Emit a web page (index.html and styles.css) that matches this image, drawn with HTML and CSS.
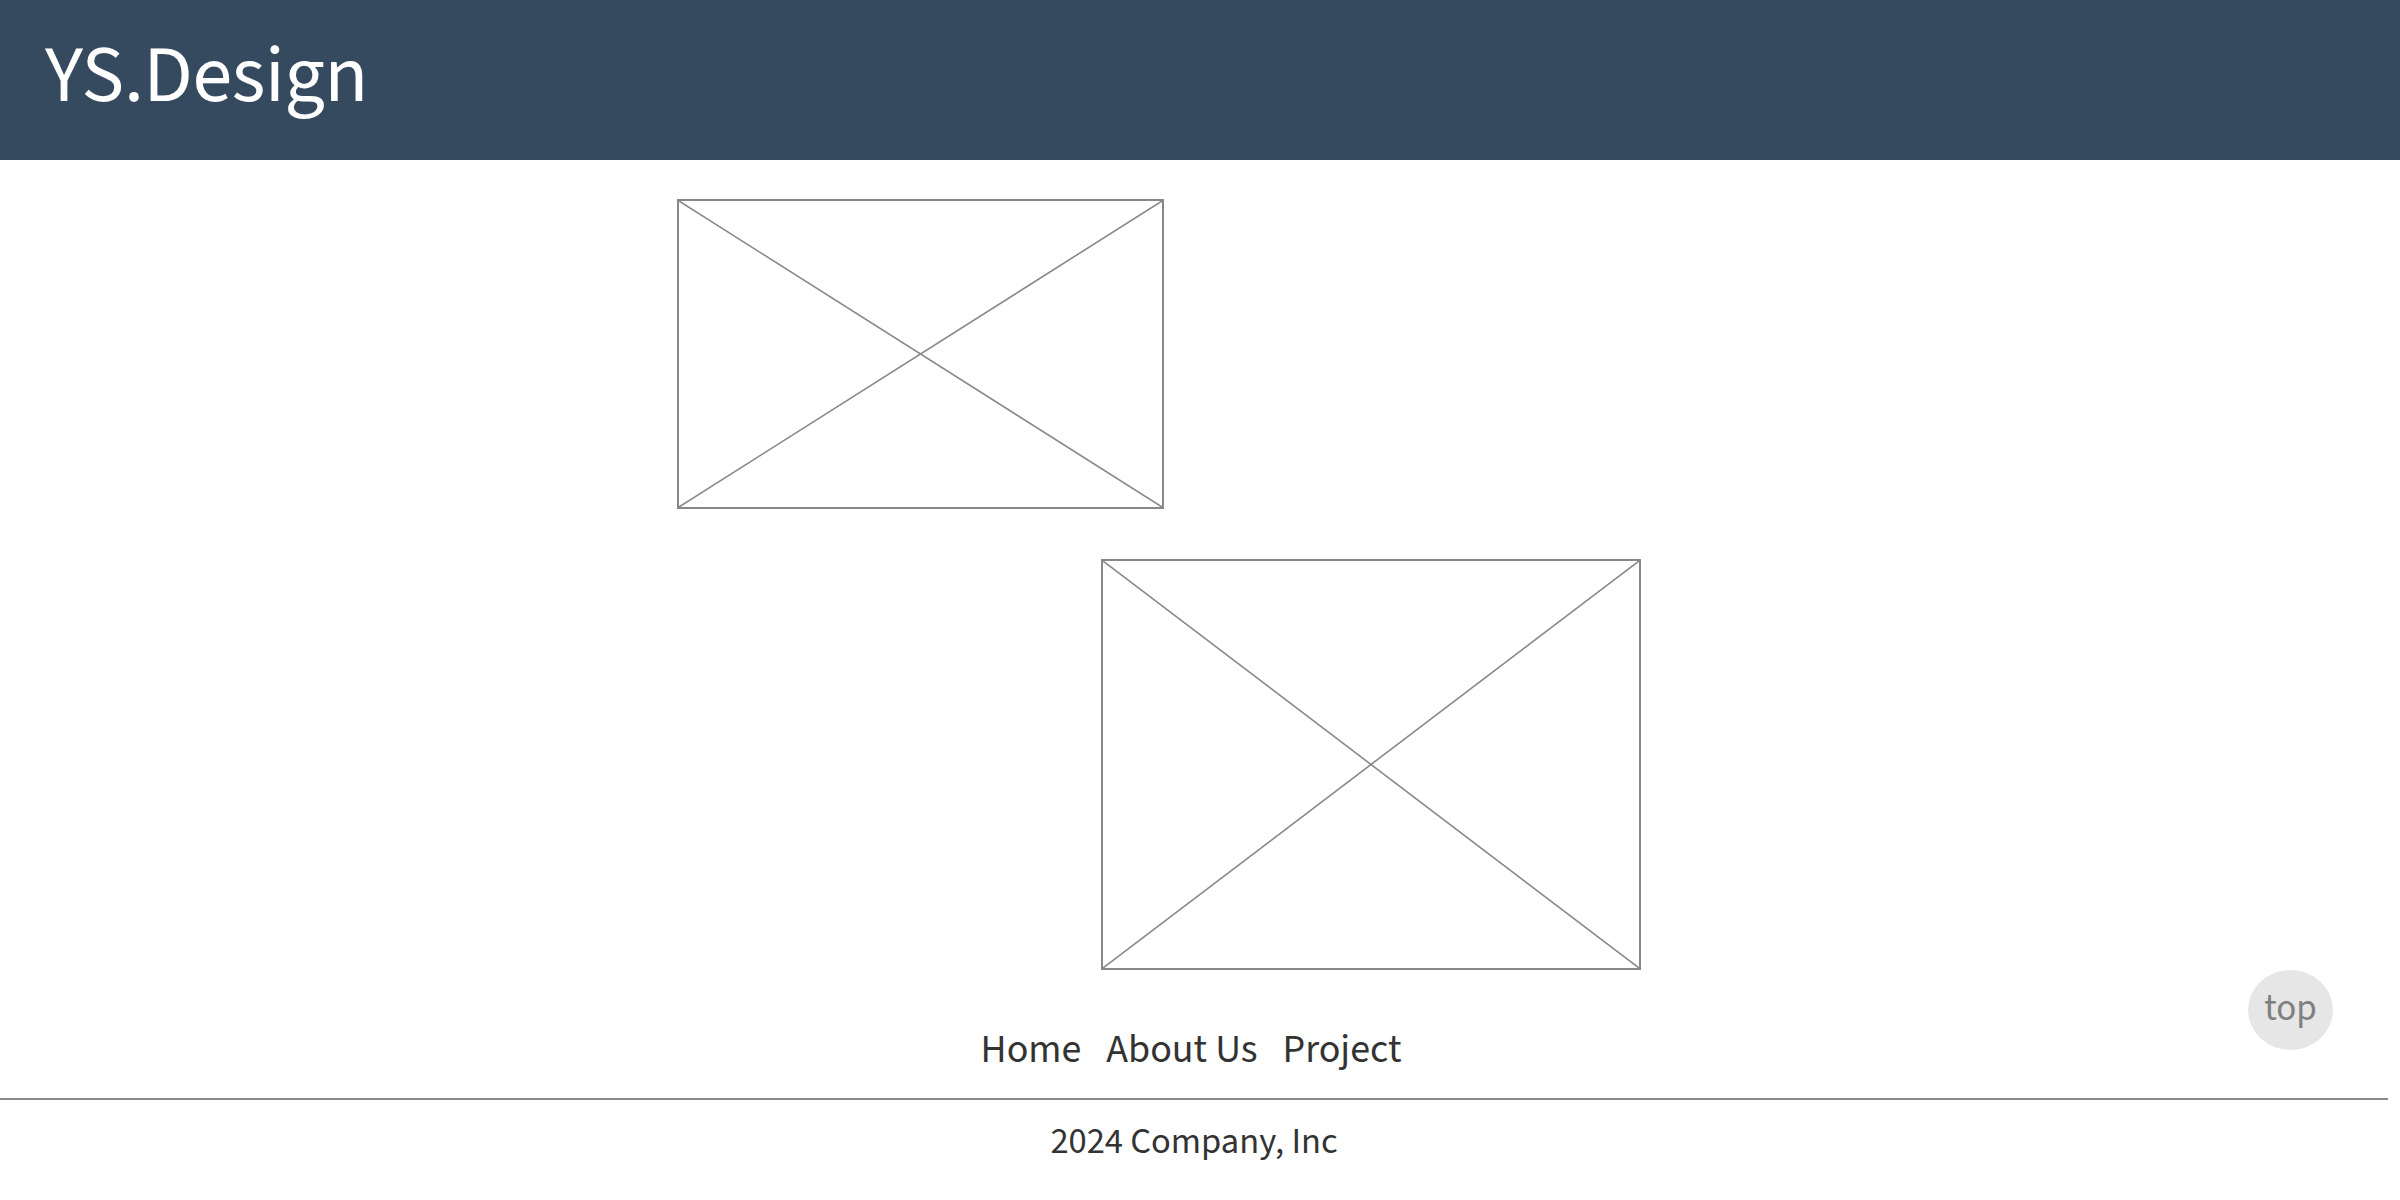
FILE: index.html
```html
<!DOCTYPE html>
<html lang="en">
<head>
<meta charset="utf-8">
<title>YS.Design</title>
<link rel="stylesheet" href="styles.css">
</head>
<body>
<header class="site-header">
  <h1 class="logo">YS.Design</h1>
</header>
<main class="content">
  <div class="ph ph-one">
    <svg class="ph-svg" viewBox="0 0 100 100" preserveAspectRatio="none">
      <line x1="0" y1="0" x2="100" y2="100" vector-effect="non-scaling-stroke"/>
      <line x1="100" y1="0" x2="0" y2="100" vector-effect="non-scaling-stroke"/>
    </svg>
  </div>
  <div class="ph ph-two">
    <svg class="ph-svg" viewBox="0 0 100 100" preserveAspectRatio="none">
      <line x1="0" y1="0" x2="100" y2="100" vector-effect="non-scaling-stroke"/>
      <line x1="100" y1="0" x2="0" y2="100" vector-effect="non-scaling-stroke"/>
    </svg>
  </div>
</main>
<footer class="site-footer">
  <nav class="footer-nav">
    <a href="#">Home</a>
    <a href="#">About Us</a>
    <a href="#">Project</a>
  </nav>
  <hr class="rule">
  <p class="copy">2024 Company, Inc</p>
</footer>
<a class="to-top" href="#">top</a>
</body>
</html>
```
FILE: styles.css
```css
* { box-sizing: border-box; }
html, body { margin: 0; padding: 0; background: #fff; }
body {
  font-family: "Source Sans Pro", "Source Sans 3", Lato, "Noto Sans", sans-serif;
  color: #333;
  height: 1200px;
  overflow: hidden;
}
.site-header {
  height: 160px;
  background: #364a5f;
  display: flex;
  align-items: center;
  padding-left: 45px;
}
.logo {
  margin: 0;
  font-weight: 400;
  font-size: 80px;
  line-height: 1;
  color: #fff;
  letter-spacing: -0.3px;
  transform: translateY(-4px);
}
.content {
  display: flex;
  flex-direction: column;
  align-items: flex-start;
  padding-top: 39px;
}
.ph {
  border: 2px solid #888;
  background: #fff;
}
.ph-svg { display: block; width: 100%; height: 100%; }
.ph-svg line { stroke: #888; stroke-width: 1.6; }
.ph-one { width: 487px; height: 310px; margin-left: 677px; }
.ph-two { width: 540px; height: 411px; margin-left: 1101px; margin-top: 50px; }
.site-footer { padding-top: 57px; }
.footer-nav {
  display: flex;
  justify-content: center;
  gap: 25px;
  padding-right: 18px;
}
.footer-nav a {
  color: #333;
  text-decoration: none;
  font-size: 40px;
  line-height: 46px;
}
.rule {
  margin: 25px 0 0 0;
  width: 2388px;
  border: 0;
  height: 2px;
  background: #888;
}
.copy {
  margin: 20px 0 0 0;
  text-align: center;
  font-size: 36.5px;
  line-height: 44px;
  padding-right: 12px;
}
.to-top {
  position: fixed;
  right: 67px;
  bottom: 150px;
  width: 85px;
  height: 80px;
  border-radius: 50%;
  background: #e6e6e6;
  color: #808080;
  text-decoration: none;
  font-size: 37px;
  display: flex;
  align-items: center;
  justify-content: center;
  padding-bottom: 4px;
}
```
